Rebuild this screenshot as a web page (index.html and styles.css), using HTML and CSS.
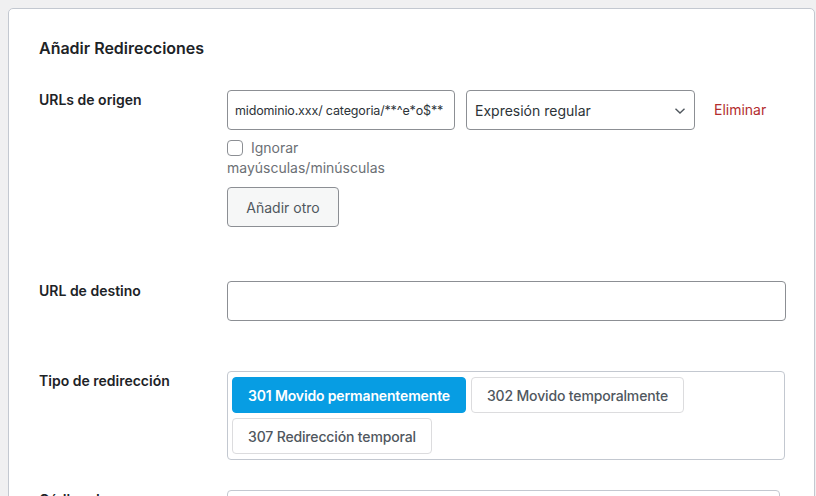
FILE: index.html
```html
<!DOCTYPE html>
<html lang="es">
<head>
  <meta charset="UTF-8">
  <title>Añadir Redirecciones</title>
  <link rel="stylesheet" href="styles.css">
</head>
<body>

  <div class="card">
    <h2 class="card-title">Añadir Redirecciones</h2>

    <div class="row row-source">
      <label class="row-label">URLs de origen</label>
      <div class="row-field">
        <div class="source-line">
          <input class="text-input source-input" type="text" value="midominio.xxx/ categoria/**^e*o$**">
          <div class="select-wrap">
            <select class="select-input">
              <option>Expresión regular</option>
              <option>Coincidencia exacta</option>
            </select>
            <svg class="select-arrow" width="12" height="8" viewBox="0 0 12 8">
              <path d="M1.5 1.8 L6 6 L10.5 1.8" fill="none" stroke="#50575e" stroke-width="1.4"/>
            </svg>
          </div>
          <a class="remove-link" href="#">Eliminar</a>
        </div>
        <label class="check-label"><input class="check-box" type="checkbox"> Ignorar mayúsculas/minúsculas</label>
        <button class="btn-secondary" type="button">Añadir otro</button>
      </div>
    </div>

    <div class="row row-target">
      <label class="row-label">URL de destino</label>
      <div class="row-field">
        <input class="text-input target-input" type="text">
      </div>
    </div>

    <div class="row row-type">
      <label class="row-label">Tipo de redirección</label>
      <div class="row-field">
        <div class="choice-group">
          <button class="choice active" type="button">301 Movido permanentemente</button>
          <button class="choice" type="button">302 Movido temporalmente</button>
          <button class="choice" type="button">307 Redirección temporal</button>
        </div>
      </div>
    </div>

    <div class="row row-code">
      <label class="row-label">Código de redirección</label>
      <div class="row-field">
        <div class="choice-group code-group">
          <button class="choice code-choice" type="button">Permitir</button>
          <button class="choice code-choice wide" type="button">Bloquear</button>
        </div>
      </div>
    </div>
  </div>

</body>
</html>
```

FILE: styles.css
```css
html, body {
  height: 100%;
  overflow: hidden;
}
body {
  margin: 8px 0 0 8px;
  background: #f0f0f1;
  font-family: Inter, "Noto Sans", Arial, sans-serif;
  font-size: 14px;
  line-height: 20px;
  color: #1d2327;
}
.card {
  box-sizing: border-box;
  width: 807px;
  min-height: 600px;
  padding: 29px 28px 30px 30px;
  background: #fff;
  border: 1px solid #c3c8d0;
  border-radius: 5px;
}
.card-title {
  margin: 0 0 32px;
  font-size: 16px;
  line-height: 20px;
  font-weight: 600;
}
.row {
  display: flex;
  align-items: flex-start;
}
.row-label {
  flex: 0 0 140px;
  margin-right: 48px;
  font-weight: 600;
}
.row-field {
  flex: 1;
}
.row-source {
  margin-bottom: 54px;
}
.row-target {
  margin-bottom: 50px;
}
.row-type {
  margin-bottom: 30px;
}
.source-line {
  display: flex;
  align-items: center;
}
.text-input {
  box-sizing: border-box;
  height: 40px;
  padding: 0 7px;
  font-family: inherit;
  font-size: 12.5px;
  letter-spacing: -0.15px;
  color: #2c3338;
  background: #fff;
  border: 1px solid #8c8f94;
  border-radius: 4px;
  outline: none;
}
.source-input {
  width: 228px;
}
.target-input {
  width: 559px;
}
.select-wrap {
  position: relative;
  margin-left: 11px;
}
.select-input {
  appearance: none;
  -webkit-appearance: none;
  box-sizing: border-box;
  width: 229px;
  height: 40px;
  padding: 0 24px 0 8px;
  font-family: inherit;
  font-size: 14px;
  color: #2c3338;
  background: #fff;
  border: 1px solid #8c8f94;
  border-radius: 4px;
  outline: none;
}
.select-arrow {
  position: absolute;
  right: 9px;
  top: 17px;
  pointer-events: none;
}
.remove-link {
  margin-left: 19px;
  color: #b32d2e;
  text-decoration: none;
}
.check-label {
  display: block;
  width: 165px;
  margin-top: 8px;
  color: #6c7075;
}
.check-box {
  appearance: none;
  -webkit-appearance: none;
  box-sizing: border-box;
  width: 16px;
  height: 16px;
  margin: 0 4px 0 0;
  vertical-align: -3px;
  background: #fff;
  border: 1px solid #8c8f94;
  border-radius: 4px;
}
.btn-secondary {
  display: block;
  box-sizing: border-box;
  width: 112px;
  height: 40px;
  margin-top: 9px;
  font-family: inherit;
  font-size: 14px;
  color: #50575e;
  background: #f6f7f7;
  border: 1px solid #8c8f94;
  border-radius: 4px;
}
.choice-group {
  box-sizing: border-box;
  width: 558px;
  display: flex;
  flex-wrap: wrap;
  gap: 5px;
  padding: 5px 4px;
  border: 1px solid #c3c8d0;
  border-radius: 4px;
}
.choice {
  height: 36px;
  padding: 0 15px;
  font-family: inherit;
  font-size: 14px;
  font-weight: 500;
  letter-spacing: -0.15px;
  color: #50575e;
  background: #fff;
  border: 1px solid #dcdcde;
  border-radius: 4px;
}
.choice.active {
  color: #fff;
  font-weight: 600;
  background: #079de3;
  border-color: #079de3;
}
.code-group {
  width: 553px;
}
.code-choice {
  width: 181px;
  background: #f6f7f7;
}
.code-choice.wide {
  flex: 1;
}
```
